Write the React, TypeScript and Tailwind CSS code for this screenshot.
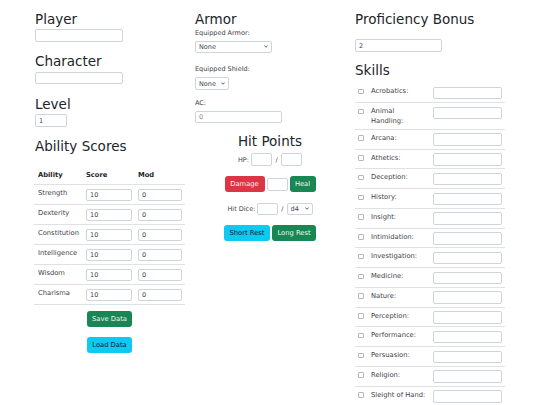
import { ReactNode } from 'react';

const abilities = ['Strength', 'Dexterity', 'Constitution', 'Intelligence', 'Wisdom', 'Charisma'];

const skills = [
  'Acrobatics:', 'Animal Handling:', 'Arcana:', 'Athetics:', 'Deception:', 'History:', 'Insight:',
  'Intimidation:', 'Investigation:', 'Medicine:', 'Nature:', 'Perception:', 'Performance:',
  'Persuasion:', 'Religion:', 'Sleight of Hand:',
];

function Heading({ children, className = '' }: { children: ReactNode; className?: string }) {
  return <h2 className={`text-[13.5px] leading-[17px] font-normal text-[#212529] ${className}`}>{children}</h2>;
}

function Field({ w, value, placeholder, className = '' }: { w: string; value?: string; placeholder?: string; className?: string }) {
  return (
    <input
      type="text"
      defaultValue={value}
      placeholder={placeholder}
      className={`block h-[12.5px] ${w} border border-[#cfd4da] rounded-[2px] bg-white px-[3px] text-[6.5px] text-[#3d4248] placeholder:text-[#8a9097] outline-none ${className}`}
    />
  );
}

function Select({ w, value }: { w: string; value: string }) {
  return (
    <div className={`relative h-[12.5px] ${w}`}>
      <select
        defaultValue={value}
        className="block h-full w-full appearance-none border border-[#cfd4da] rounded-[2px] bg-white pl-[3px] text-[6.5px] text-[#3d4248] outline-none"
      >
        <option>{value}</option>
      </select>
      <svg className="absolute right-[4px] top-[4.5px] w-[4px] h-[3px] pointer-events-none" viewBox="0 0 8 6" fill="none">
        <path d="M1 1.5l3 3 3-3" stroke="#343a40" strokeWidth="1.6" strokeLinecap="round" strokeLinejoin="round" />
      </svg>
    </div>
  );
}

function Btn({ children, tone, w }: { children: ReactNode; tone: 'green' | 'cyan' | 'red'; w: string }) {
  const tones = {
    green: 'bg-[#198754] text-[#f1f5f3]',
    cyan: 'bg-[#0dcaf0] text-[#101418]',
    red: 'bg-[#dc3545] text-[#fbf1f2]',
  };
  return (
    <button className={`h-[16px] ${w} rounded-[3px] text-[6.75px] leading-none flex items-center justify-center ${tones[tone]}`}>
      {children}
    </button>
  );
}

export default function App() {
  return (
    <div className="w-[540px] h-[405px] overflow-hidden bg-white font-['DejaVu_Sans',sans-serif] text-[#212529]">
      <div className="grid grid-cols-[150px_150px_150px] gap-x-[10px] pl-[35px] pt-[10.8px]">
        {/* colonne 1 */}
        <div>
          <Heading className="mb-[1.5px]">Player</Heading>
          <Field w="w-[88px]" className="mb-[11.5px]" />
          <Heading className="mb-[1.5px]">Character</Heading>
          <Field w="w-[88px]" className="mb-[11.5px]" />
          <Heading className="mb-[1.5px]">Level</Heading>
          <Field w="w-[32px]" value="1" className="mb-[11.5px]" />
          <Heading className="mb-[9px]">Ability Scores</Heading>
          <table className="w-[151px] -ml-[1px] border-collapse text-[6.75px] leading-[10px] text-[#3d4248]">
            <thead>
              <tr className="border-b border-[#dee2e6]">
                <th className="w-[48px] pl-[4px] pt-[6px] pb-[4px] text-left font-bold text-[#212529]">Ability</th>
                <th className="w-[52px] pl-[4px] pt-[6px] pb-[4px] text-left font-bold text-[#212529]">Score</th>
                <th className="pl-[4px] pt-[6px] pb-[4px] text-left font-bold text-[#212529]">Mod</th>
              </tr>
            </thead>
            <tbody>
              {abilities.map((a) => (
                <tr key={a} className="border-b border-[#dee2e6] h-[20px]">
                  <td className="pl-[4px] pt-[3px] align-top">{a}</td>
                  <td className="pl-[4px] pt-[3.5px] align-top">
                    <Field w="w-[45.5px]" value="10" />
                  </td>
                  <td className="pl-[4px] pt-[3.5px] align-top">
                    <Field w="w-[44px]" value="0" />
                  </td>
                </tr>
              ))}
            </tbody>
          </table>
          <div className="flex flex-col items-center w-[151px] -ml-[1px] mt-[6px] gap-[10px]">
            <Btn tone="green" w="w-[45px]">Save Data</Btn>
            <Btn tone="cyan" w="w-[45px]">Load Data</Btn>
          </div>
        </div>

        {/* colonne 2 */}
        <div className="text-[6.5px] leading-[10px] text-[#3d4248]">
          <Heading>Armor</Heading>
          <div className="mb-[3px]">Equipped Armor:</div>
          <Select w="w-[77px]" value="None" />
          <div className="mt-[11px] mb-[3px]">Equipped Shield:</div>
          <Select w="w-[34px]" value="None" />
          <div className="mt-[8.5px] mb-[2.5px]">AC:</div>
          <Field w="w-[87px]" placeholder="0" />
          <Heading className="mt-[10px] mb-[3px] text-center">Hit Points</Heading>
          <div className="flex items-center justify-center gap-[2px]">
            <span>HP:</span>
            <Field w="w-[21px]" />
            <span className="px-[1.5px]">/</span>
            <Field w="w-[21px]" />
          </div>
          <div className="flex items-center justify-center gap-[2px] mt-[10.5px]">
            <Btn tone="red" w="w-[40px]">Damage</Btn>
            <Field w="w-[21px]" />
            <Btn tone="green" w="w-[26px]">Heal</Btn>
          </div>
          <div className="flex items-center justify-center gap-[2px] mt-[10.5px]">
            <span>Hit Dice:</span>
            <Field w="w-[21px]" />
            <span className="px-[1px]">/</span>
            <Select w="w-[26px]" value="d4" />
          </div>
          <div className="flex items-center justify-center gap-[2px] mt-[10px]">
            <Btn tone="cyan" w="w-[46px]">Short Rest</Btn>
            <Btn tone="green" w="w-[44px]">Long Rest</Btn>
          </div>
        </div>

        {/* colonne 3 */}
        <div>
          <Heading>Proficiency Bonus</Heading>
          <Field w="w-[87px]" value="2" className="mt-[11.5px] mb-[10px]" />
          <Heading className="mb-[4.5px]">Skills</Heading>
          <table className="w-[150px] table-fixed border-collapse text-[6.75px] leading-[10px] text-[#3d4248]">
            <colgroup>
              <col className="w-[12px]" />
              <col className="w-[62px]" />
              <col />
            </colgroup>
            <tbody>
              {skills.map((s) => (
                <tr key={s} className="border-b border-[#dee2e6]">
                  <td className="pl-[3px] pt-[5.5px] align-top">
                    <span className="block w-[5.5px] h-[5.5px] border border-[#b3b8bd] rounded-[1px]" />
                  </td>
                  <td className="pl-[4px] pr-[2px] pt-[3px] pb-[2.75px] align-top">{s}</td>
                  <td className="pl-[4px] pt-[3.5px] pb-[2.75px] align-top">
                    <Field w="w-[69px]" />
                  </td>
                </tr>
              ))}
            </tbody>
          </table>
        </div>
      </div>
    </div>
  );
}
